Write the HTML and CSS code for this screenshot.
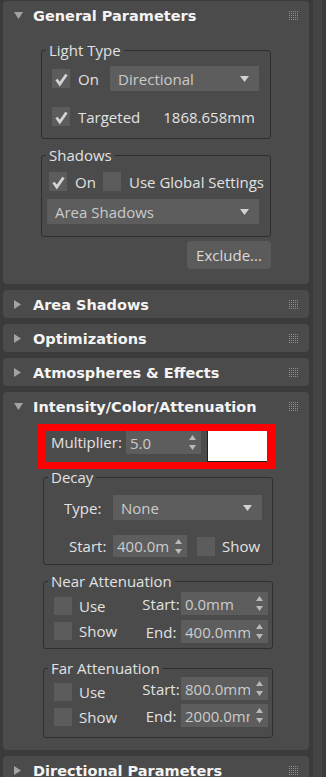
FILE: index.html
```html
<!DOCTYPE html>
<html lang="en">
<head>
    <meta charset="UTF-8">
    <meta name="viewport" content="width=device-width, initial-scale=1.0">
    <title>Light Parameters</title>
    <link rel="stylesheet" href="styles.css">
</head>
<body>

    <main class="panel">

        <!-- General Parameters -->
        <section class="rollout">
            <div class="head">
                <span class="tri"><svg width="9" height="7"><path d="M0 0H9L4.5 7z"/></svg></span>
                <h2>General Parameters</h2>
                <span class="grip"></span>
            </div>
            <div class="body general">
                <fieldset class="group lighttype">
                    <legend>Light Type</legend>
                    <div class="row">
                        <label class="check"><span class="box"><svg width="18" height="19"><path d="M4.5 10.5L7.8 15L14.5 5.5"/></svg></span>On</label>
                        <div class="drop w-type">Directional<svg width="9" height="6"><path d="M0 0H9L4.5 6z"/></svg></div>
                    </div>
                    <div class="row">
                        <label class="check"><span class="box"><svg width="18" height="19"><path d="M4.5 10.5L7.8 15L14.5 5.5"/></svg></span>Targeted</label>
                        <span class="value">1868.658mm</span>
                    </div>
                </fieldset>

                <fieldset class="group shadows">
                    <legend>Shadows</legend>
                    <div class="row short">
                        <label class="check first"><span class="box"><svg width="18" height="19"><path d="M4.5 10.5L7.8 15L14.5 5.5"/></svg></span>On</label>
                        <label class="check"><span class="box"></span>Use Global Settings</label>
                    </div>
                    <div class="drop w-shadow">Area Shadows<svg width="9" height="6"><path d="M0 0H9L4.5 6z"/></svg></div>
                </fieldset>

                <button class="btn">Exclude...</button>
            </div>
        </section>

        <section class="rollout">
            <div class="head">
                <span class="tri"><svg width="7" height="9"><path d="M0 0L7 4.5L0 9z"/></svg></span>
                <h2>Area Shadows</h2>
                <span class="grip"></span>
            </div>
        </section>

        <section class="rollout">
            <div class="head">
                <span class="tri"><svg width="7" height="9"><path d="M0 0L7 4.5L0 9z"/></svg></span>
                <h2>Optimizations</h2>
                <span class="grip"></span>
            </div>
        </section>

        <section class="rollout">
            <div class="head">
                <span class="tri"><svg width="7" height="9"><path d="M0 0L7 4.5L0 9z"/></svg></span>
                <h2>Atmospheres &amp; Effects</h2>
                <span class="grip"></span>
            </div>
        </section>

        <!-- Intensity/Color/Attenuation -->
        <section class="rollout intensity">
            <div class="head">
                <span class="tri"><svg width="9" height="7"><path d="M0 0H9L4.5 7z"/></svg></span>
                <h2>Intensity/Color/Attenuation</h2>
                <span class="grip"></span>
            </div>
            <div class="body">
                <div class="mult">
                    <span class="mult-label">Multiplier:</span>
                    <div class="spin w-mult"><span class="val">5.0</span><svg width="7" height="15"><path d="M3.5 0L7 5H0z M0 10H7L3.5 15z"/></svg></div>
                    <span class="swatch"></span>
                </div>

                <fieldset class="group decay">
                    <legend>Decay</legend>
                    <div class="row">
                        <span class="lbl type">Type:</span>
                        <div class="drop w-decay">None<svg width="9" height="6"><path d="M0 0H9L4.5 6z"/></svg></div>
                    </div>
                    <div class="row start-row">
                        <span class="lbl start">Start:</span>
                        <div class="spin w-decay-start"><span class="val">400.0mm</span><svg width="7" height="15"><path d="M3.5 0L7 5H0z M0 10H7L3.5 15z"/></svg></div>
                        <label class="check show"><span class="box"></span>Show</label>
                    </div>
                </fieldset>

                <fieldset class="group atten near">
                    <legend>Near Attenuation</legend>
                    <div class="cols">
                        <div class="flags">
                            <label class="check"><span class="box sq"></span>Use</label>
                            <label class="check"><span class="box sq"></span>Show</label>
                        </div>
                        <div class="fields">
                            <div class="field"><span class="flbl">Start:</span><div class="spin w-att"><span class="val">0.0mm</span><svg width="7" height="15"><path d="M3.5 0L7 5H0z M0 10H7L3.5 15z"/></svg></div></div>
                            <div class="field"><span class="flbl">End:</span><div class="spin w-att"><span class="val">400.0mm</span><svg width="7" height="15"><path d="M3.5 0L7 5H0z M0 10H7L3.5 15z"/></svg></div></div>
                        </div>
                    </div>
                </fieldset>

                <fieldset class="group atten far">
                    <legend>Far Attenuation</legend>
                    <div class="cols">
                        <div class="flags">
                            <label class="check"><span class="box sq"></span>Use</label>
                            <label class="check"><span class="box sq"></span>Show</label>
                        </div>
                        <div class="fields">
                            <div class="field"><span class="flbl">Start:</span><div class="spin w-att"><span class="val">800.0mm</span><svg width="7" height="15"><path d="M3.5 0L7 5H0z M0 10H7L3.5 15z"/></svg></div></div>
                            <div class="field"><span class="flbl">End:</span><div class="spin w-att"><span class="val">2000.0mm</span><svg width="7" height="15"><path d="M3.5 0L7 5H0z M0 10H7L3.5 15z"/></svg></div></div>
                        </div>
                    </div>
                </fieldset>
            </div>
            <div class="mark"></div>
        </section>

        <section class="rollout">
            <div class="head">
                <span class="tri"><svg width="7" height="9"><path d="M0 0L7 4.5L0 9z"/></svg></span>
                <h2>Directional Parameters</h2>
                <span class="grip"></span>
            </div>
        </section>

    </main>

    <div class="track"></div>

</body>
</html>
```

FILE: styles.css
```css
* {
    box-sizing: border-box;
}

body {
    margin: 0;
    height: 777px;
    overflow: hidden;
    display: flex;
    background-color: #3b3b3b;
    font-family: "Open Sans", "Segoe UI", sans-serif;
    font-size: 15px;
    color: #e2e2e2;
}

.panel {
    width: 306px;
    margin-left: 3px;
    padding-top: 1px;
    flex-shrink: 0;
}

.track {
    width: 9px;
    margin-left: 4px;
    background-color: #444444;
}

/* rollouts */
.rollout {
    position: relative;
    background-color: #4b4b4b;
    border-radius: 4px;
    margin-bottom: 6px;
}

.head {
    height: 28px;
    display: flex;
    align-items: center;
    padding: 0 11px;
}

.tri {
    width: 19px;
    display: flex;
    align-items: center;
}

.tri svg {
    fill: #a3a3a3;
}

.head h2 {
    flex: 1;
    margin: 0;
    padding-top: 1px;
    font-family: "DejaVu Sans", Verdana, sans-serif;
    font-weight: bold;
    font-size: 14.5px;
    line-height: 28px;
    color: #f4f4f4;
    white-space: nowrap;
}

.grip {
    width: 9px;
    height: 9px;
    background: conic-gradient(from 270deg at 1px 1px, #8e8e8e 25%, transparent 0) 0 0 / 2px 2px;
}

.body {
    padding: 12px 38px 15px;
}

/* group boxes */
.group {
    margin: 0;
    padding: 0;
    min-width: 0;
    border: 1px solid #2e2e2e;
    border-radius: 3px;
}

.group legend {
    margin-left: 4px;
    padding: 0 3px;
    line-height: 18px;
}

.row {
    display: flex;
    align-items: center;
    height: 25px;
}

.check {
    display: flex;
    align-items: center;
    gap: 8px;
    white-space: nowrap;
}

.box {
    width: 18px;
    height: 19px;
    background-color: #5c5c5c;
    flex-shrink: 0;
}

.box svg {
    display: block;
    fill: none;
    stroke: #d4d4d4;
    stroke-width: 2.8;
}

.box.sq {
    height: 18px;
}

.drop {
    height: 25px;
    display: flex;
    align-items: center;
    justify-content: space-between;
    padding: 0 10px 0 8px;
    background-color: #5d5d5d;
    color: #cbcbcb;
}

.drop svg {
    fill: #d2d2d2;
}

.spin {
    display: flex;
    align-items: center;
    background-color: #5d5d5d;
    color: #cbcbcb;
    padding: 0 5px 0 4px;
}

.spin .val {
    flex: 1;
    overflow: hidden;
    white-space: nowrap;
}

.spin svg {
    margin-left: 6px;
    flex-shrink: 0;
    fill: #b9b9b9;
}

/* general parameters */
.general {
    padding-top: 12px;
}

.lighttype {
    padding: 7px 0 9px;
}

.lighttype .row {
    padding: 0 11px 0 10px;
}

.lighttype .row + .row {
    margin-top: 13px;
}

.w-type {
    width: 149px;
    margin-left: auto;
}

.value {
    margin-left: auto;
    margin-right: 4px;
}

.shadows {
    margin-top: 7px;
    padding: 8px 0 12px;
}

.row.short {
    height: 19px;
    padding-left: 5px;
}

.check.first {
    width: 54px;
    margin-left: 2px;
}

.w-shadow {
    width: 212px;
    margin: 8px 0 0 5px;
}

.btn {
    display: block;
    width: 84px;
    height: 28px;
    margin: 4px 0 0 auto;
    border: none;
    border-radius: 4px;
    background-color: #5b5b5b;
    color: #dadada;
    font-family: inherit;
    font-size: 15px;
    padding: 0;
}

/* intensity */
.intensity .body {
    padding: 11px 36px 12px 40px;
}

.mult {
    display: flex;
    align-items: flex-start;
    height: 31px;
}

.mult-label {
    width: 75px;
    margin-left: 8px;
    line-height: 23px;
}

.w-mult {
    width: 75px;
    height: 23px;
}

.swatch {
    width: 62px;
    height: 32px;
    margin-top: -1px;
    margin-left: 6px;
    background-color: #ffffff;
    border: 1px solid #1f1f1f;
}

.mark {
    position: absolute;
    top: 32px;
    left: 34px;
    width: 238px;
    height: 45px;
    border-style: solid;
    border-color: #ff0000;
    border-width: 7px 8px;
}

.decay {
    margin-top: 6px;
    padding: 9px 0 7px;
}

.lbl {
    width: 69px;
}

.lbl.type {
    padding-left: 20px;
}

.lbl.start {
    padding-left: 25px;
}

.w-decay {
    width: 149px;
}

.start-row {
    margin-top: 15px;
    height: 22px;
}

.w-decay-start {
    width: 74px;
    height: 22px;
}

.check.show {
    margin-left: 10px;
    gap: 7px;
}

.near {
    margin-top: 7px;
}

.far {
    margin-top: 10px;
}

.cols {
    display: flex;
    align-items: flex-start;
    padding: 0 4px 0 10px;
}

.flags {
    display: flex;
    flex-direction: column;
    gap: 7px;
    margin-top: 7px;
}

.flags .check {
    gap: 7px;
    height: 18px;
}

.far .flags {
    margin-top: 6px;
}

.fields {
    margin-left: auto;
    display: flex;
    flex-direction: column;
    gap: 5px;
    padding: 2px 0 5px;
}

.far .fields {
    gap: 4px;
    padding: 0 0 10px;
}

.field {
    display: flex;
    align-items: center;
}

.flbl {
    width: 40px;
    text-align: center;
}

.w-att {
    width: 87px;
    height: 23px;
}
```
